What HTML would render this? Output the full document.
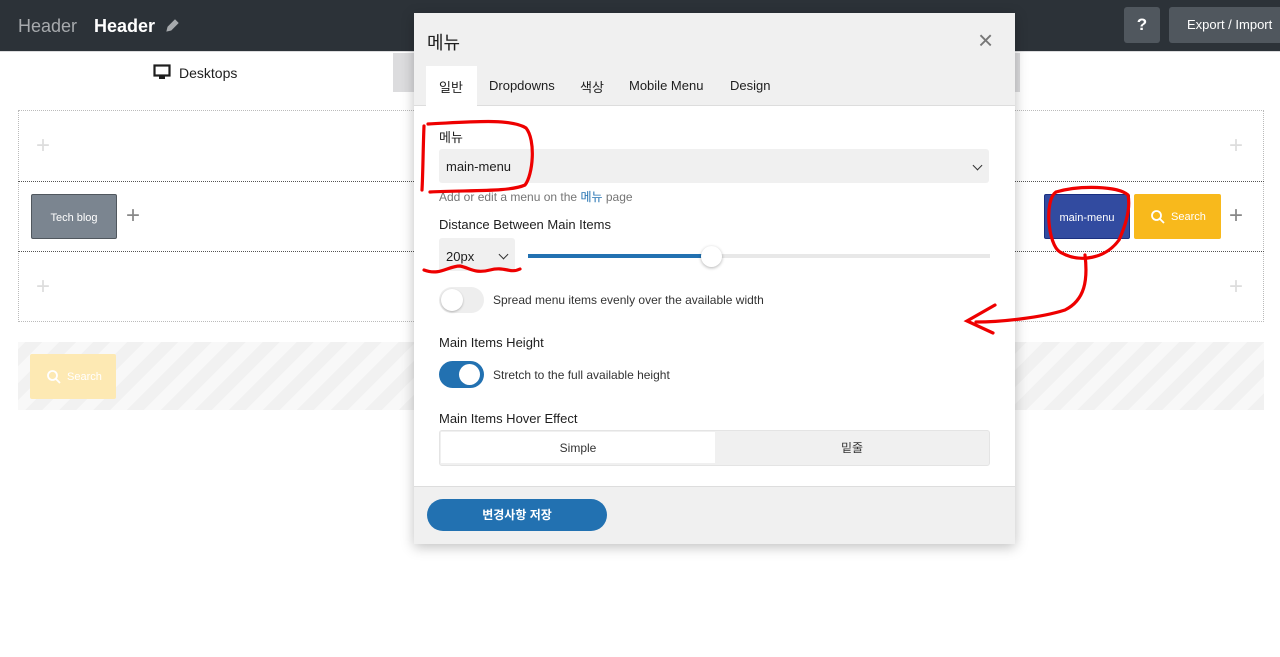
<!DOCTYPE html>
<html><head><meta charset="utf-8"><style>
*{box-sizing:border-box;margin:0;padding:0}
body{width:1280px;height:657px;overflow:hidden;background:#fff;font-family:"Liberation Sans","Noto Sans CJK KR",sans-serif;position:relative;color:#1e1e1e}
.abs{position:absolute}
.top{left:0;top:0;width:1280px;height:52px;background:#2c3238;border-bottom:1px solid #dcdcde}
.plus{position:absolute;font-size:24px;color:#ddd;font-weight:300;line-height:1}
.lab{position:absolute;left:25px;font-size:13px;color:#1e1e1e}
.sel{position:absolute;background:#f0f0f0;border-radius:3px}
.chev{position:absolute;width:7px;height:7px;border-right:1.5px solid #333;border-bottom:1.5px solid #333;transform:rotate(45deg)}
</style></head><body>
<div class="abs top">
  <div class="abs" style="left:18px;top:16px;font-size:18px;color:#a7aaad">Header</div>
  <div class="abs" style="left:94px;top:16px;font-size:18px;color:#fff;font-weight:bold">Header</div>
  <svg class="abs" style="left:164px;top:18px" width="16" height="16" viewBox="0 0 16 16"><path d="M3 13l1-4 7-7 3 3-7 7z" fill="#a7aaad" stroke="#a7aaad" stroke-width="1"/></svg>
  <div class="abs" style="left:1124px;top:7px;width:36px;height:36px;background:#50575e;border-radius:3px;color:#fff;font-weight:bold;font-size:17px;text-align:center;line-height:36px">?</div>
  <div class="abs" style="left:1169px;top:7px;width:111px;height:36px;background:#50575e;border-radius:3px 0 0 3px;color:#fff;font-size:13px;line-height:36px;padding-left:18px">Export / Import</div>
</div>
<div class="abs" style="left:393px;top:53px;width:627px;height:39px;background:#dcdcde"></div>
<svg class="abs" style="left:153px;top:64px" width="18" height="16" viewBox="0 0 18 16"><rect x="1.5" y="1.5" width="15" height="10" fill="none" stroke="#1e1e1e" stroke-width="2.2"/><rect x="6" y="12" width="6" height="3" fill="#1e1e1e"/></svg>
<div class="abs" style="left:179px;top:65px;font-size:14px">Desktops</div>

<div class="abs" style="left:18px;top:110px;width:1246px;height:212px;border:1px dotted #bbb"></div>
<div class="abs" style="left:18px;top:181px;width:1246px;height:71px;border:1px dotted #555;border-width:1px 0"></div>
<div class="plus" style="left:36px;top:134px">+</div>
<div class="plus" style="left:36px;top:275px">+</div>
<div class="plus" style="left:1229px;top:134px">+</div>
<div class="plus" style="left:1229px;top:275px">+</div>
<div class="abs" style="left:31px;top:194px;width:86px;height:45px;background:#7b8590;border:1px solid #50575e;border-radius:2px;color:#fff;font-size:11px;text-align:center;line-height:46px">Tech blog</div>
<div class="plus" style="left:126px;top:204px;color:#888">+</div>
<div class="abs" style="left:1044px;top:194px;width:86px;height:45px;background:#324ba0;border:1px solid #1a2f80;border-radius:2px;color:#fff;font-size:11px;text-align:center;line-height:46px">main-menu</div>
<div class="abs" style="left:1134px;top:194px;width:87px;height:45px;background:#f8b91c;border-radius:2px;color:#fff;font-size:11px;line-height:47px;padding-left:37px">Search</div>
<svg class="abs" style="left:1150px;top:209px" width="16" height="16" viewBox="0 0 16 16"><circle cx="6.5" cy="6.5" r="4.5" fill="none" stroke="#fff" stroke-width="1.8"/><path d="M10 10l4 4" stroke="#fff" stroke-width="1.8"/></svg>
<div class="plus" style="left:1229px;top:204px;color:#888">+</div>

<div class="abs" style="left:18px;top:342px;width:1246px;height:68px;background:repeating-linear-gradient(-45deg,#f1f1f1 0 12px,#f8f8f8 12px 24px)"></div>
<div class="abs" style="left:30px;top:354px;width:86px;height:45px;background:#fde9b3;border-radius:2px;color:#fff;font-size:11px;line-height:47px;padding-left:37px">Search</div>
<svg class="abs" style="left:46px;top:369px" width="16" height="16" viewBox="0 0 16 16"><circle cx="6.5" cy="6.5" r="4.5" fill="none" stroke="#fff" stroke-width="1.8"/><path d="M10 10l4 4" stroke="#fff" stroke-width="1.8"/></svg>

<div class="abs" style="left:414px;top:13px;width:601px;height:531px;background:#fff;box-shadow:0 3px 12px rgba(0,0,0,.25)">
  <div class="abs" style="left:0;top:0;width:601px;height:93px;background:#f0f0f0;border-bottom:1px solid #ddd"></div>
  <div class="abs" style="left:13px;top:16px;font-size:18px">메뉴</div>
  <div class="abs" style="left:564px;top:12px;font-size:26px;color:#777;font-weight:300">×</div>
  <div class="abs" style="left:12px;top:53px;width:51px;height:41px;background:#fff"></div>
  <div class="abs" style="left:25px;top:64px;font-size:13px">일반</div>
  <div class="abs" style="left:75px;top:65px;font-size:13px">Dropdowns</div>
  <div class="abs" style="left:166px;top:64px;font-size:13px">색상</div>
  <div class="abs" style="left:215px;top:65px;font-size:13px">Mobile Menu</div>
  <div class="abs" style="left:316px;top:65px;font-size:13px">Design</div>

  <div class="lab" style="top:114px">메뉴</div>
  <div class="sel" style="left:25px;top:136px;width:550px;height:34px"></div>
  <div class="abs" style="left:32px;top:146px;font-size:13px">main-menu</div>
  <div class="chev" style="left:560px;top:149px"></div>
  <div class="abs" style="left:25px;top:175px;font-size:12px;color:#757575">Add or edit a menu on the <span style="color:#2271b1">메뉴</span> page</div>
  <div class="lab" style="top:204px">Distance Between Main Items</div>
  <div class="sel" style="left:25px;top:225px;width:76px;height:33px"></div>
  <div class="abs" style="left:32px;top:236px;font-size:13px">20px</div>
  <div class="chev" style="left:86px;top:238px"></div>
  <div class="abs" style="left:114px;top:241px;width:462px;height:4px;background:#e8e8e8"></div>
  <div class="abs" style="left:114px;top:241px;width:184px;height:4px;background:#2271b1"></div>
  <div class="abs" style="left:287px;top:233px;width:21px;height:21px;border-radius:50%;background:#fff;box-shadow:0 1px 3px rgba(0,0,0,.3)"></div>
  <div class="abs" style="left:25px;top:274px;width:45px;height:26px;border-radius:13px;background:#eee"></div>
  <div class="abs" style="left:27px;top:276px;width:22px;height:22px;border-radius:50%;background:#fff;box-shadow:0 1px 2px rgba(0,0,0,.25)"></div>
  <div class="abs" style="left:79px;top:280px;font-size:12px;color:#333">Spread menu items evenly over the available width</div>
  <div class="lab" style="top:322px">Main Items Height</div>
  <div class="abs" style="left:25px;top:348px;width:45px;height:27px;border-radius:14px;background:#2271b1"></div>
  <div class="abs" style="left:45px;top:351px;width:21px;height:21px;border-radius:50%;background:#fff"></div>
  <div class="abs" style="left:79px;top:355px;font-size:12px;color:#333">Stretch to the full available height</div>
  <div class="lab" style="top:398px">Main Items Hover Effect</div>
  <div class="abs" style="left:25px;top:417px;width:551px;height:36px;background:#f0f0f0;border:1px solid #e4e4e4;border-radius:3px"></div>
  <div class="abs" style="left:27px;top:419px;width:274px;height:31px;background:#fff;text-align:center;line-height:33px;font-size:12px;color:#333">Simple</div>
  <div class="abs" style="left:301px;top:419px;width:274px;height:31px;text-align:center;line-height:33px;font-size:12px;color:#333">밑줄</div>

  <div class="abs" style="left:0;top:473px;width:601px;height:58px;background:#f0f0f0;border-top:1px solid #ddd"></div>
  <div class="abs" style="left:13px;top:486px;width:180px;height:32px;border-radius:16px;background:#2271b1;color:#fff;font-size:12px;font-weight:bold;text-align:center;line-height:33px">변경사항 저장</div>
</div>

<svg class="abs" style="left:0;top:0" width="1280" height="657" viewBox="0 0 1280 657" fill="none" stroke="#e00" stroke-width="3.2" stroke-linecap="round">
  <path d="M424 126 C423 150 423 172 422 190"/>
  <path d="M428 124 C470 122 510 118 526 128 C536 140 533 175 525 185 C510 192 470 190 430 192"/>
  <path d="M424 270 C440 276 448 266 460 266 C470 268 475 274 490 270 C505 266 510 274 520 269"/>
  <path d="M1128 195 C1118 186 1080 185 1056 192 C1044 200 1048 245 1060 252 C1080 264 1106 258 1119 240 C1128 220 1130 205 1128 195"/>
  <path d="M1085 255 C1088 280 1085 300 1065 310 C1040 318 1000 322 976 322"/>
  <path d="M995 305 L967 321 L993 333"/>
</svg>
</body></html>
